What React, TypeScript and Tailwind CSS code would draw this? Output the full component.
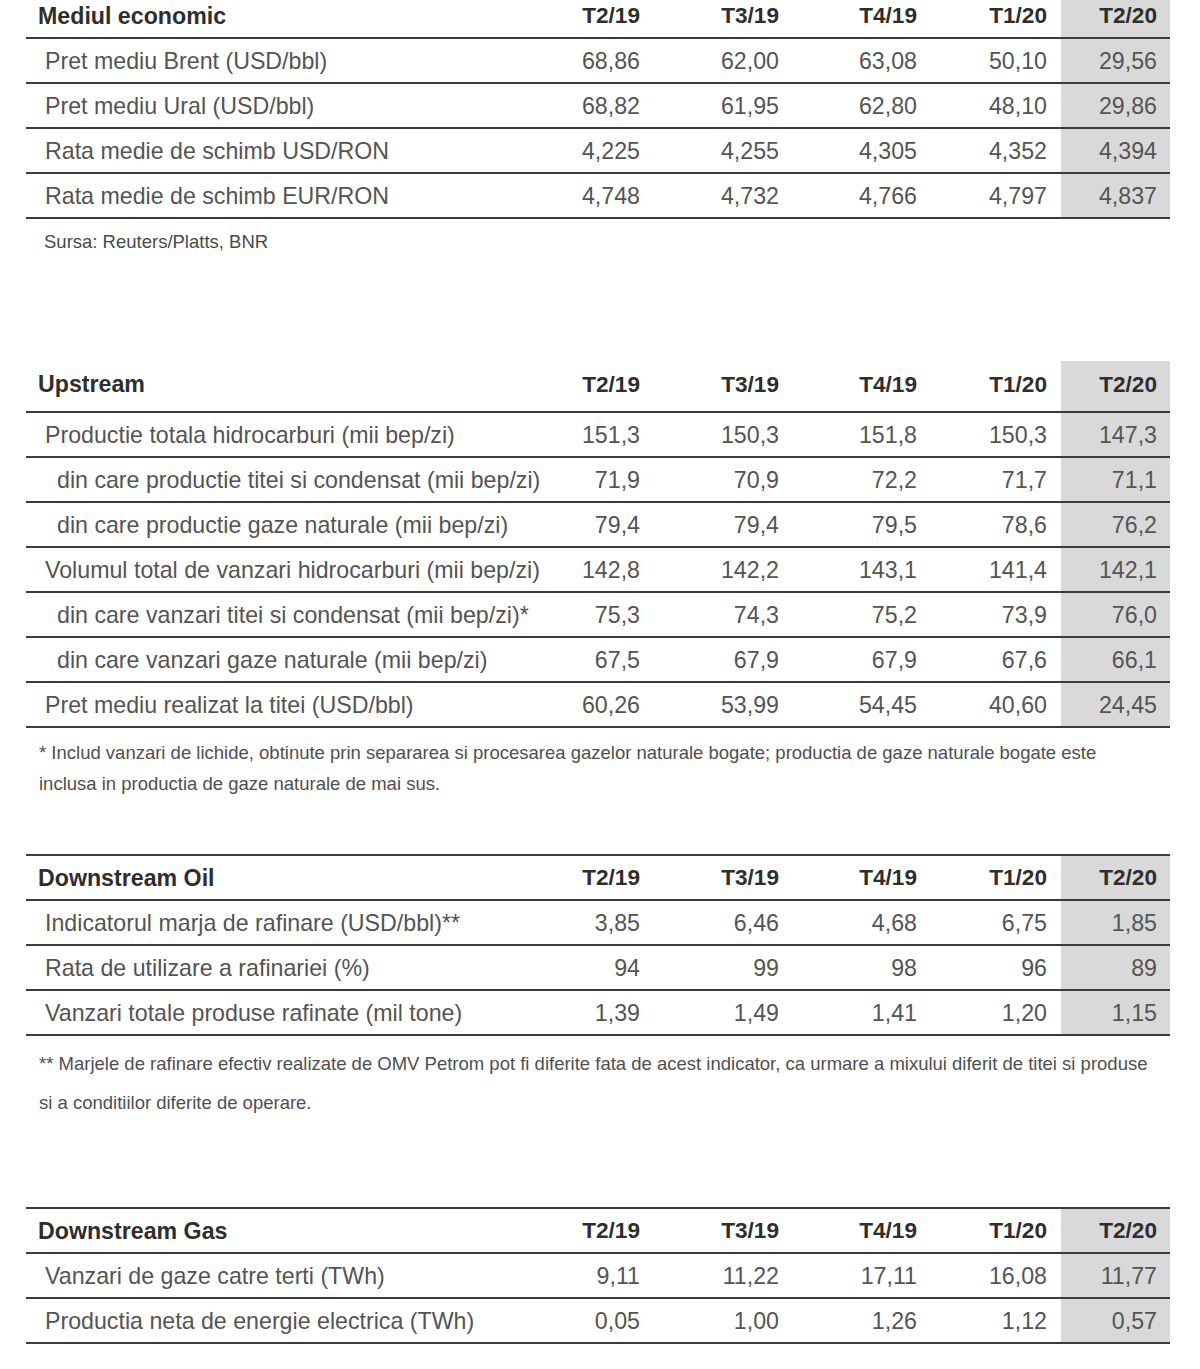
import React from 'react';

type Row = { label: string; values: string[]; indent?: boolean };

interface TableProps {
  title: string;
  rows: Row[];
  variant: 'top' | 'plain' | 'bordered';
}

const QUARTERS = ['T2/19', 'T3/19', 'T4/19', 'T1/20', 'T2/20'];
// widths of the numeric columns, left to right (first one is loose)
const COL_W = ['w-[110px]', 'w-[139px]', 'w-[138px]', 'w-[130px]', 'w-[109px]'];

function Cells({ values, bold, pad }: { values: string[]; bold?: boolean; pad: string }) {
  return (
    <>
      {values.map((v, i) => (
        <div
          key={i}
          className={`${COL_W[i]} ${pad} shrink-0 h-full flex items-center justify-end ${
            i === 4 ? 'pr-[13px] bg-[#d9d9d9]' : 'pr-[14px]'
          } ${bold ? 'font-bold text-[#2e2e2e] text-[22.6px]' : ''}`}
        >
          {v}
        </div>
      ))}
    </>
  );
}

function DataTable({ title, rows, variant }: TableProps) {
  const headerCls = variant === 'plain' ? 'h-[52px] border-b-2' : 'h-[47px] border-y-2';
  const headerPad = variant === 'plain' ? 'pb-[2px]' : 'pt-[2px]';

  return (
    <div className="text-[23.2px] leading-none text-[#545454]">
      {/* Header */}
      <div className={`flex items-stretch border-[#3b3b3b] ${headerCls}`}>
        <div className={`flex-1 flex items-center pl-[12px] font-bold text-[#2e2e2e] ${headerPad}`}>{title}</div>
        <Cells values={QUARTERS} bold pad={headerPad} />
      </div>

      {/* Rows */}
      {rows.map((r) => (
        <div key={r.label} className="flex items-stretch h-[45px] border-b-2 border-[#3b3b3b]">
          <div className={`flex-1 flex items-center pt-[3px] whitespace-nowrap ${r.indent ? 'pl-[31px]' : 'pl-[19px]'}`}>
            {r.label}
          </div>
          <Cells values={r.values} pad="pt-[3px]" />
        </div>
      ))}
    </div>
  );
}

const ECONOMIC: Row[] = [
  { label: 'Pret mediu Brent (USD/bbl)', values: ['68,86', '62,00', '63,08', '50,10', '29,56'] },
  { label: 'Pret mediu Ural (USD/bbl)', values: ['68,82', '61,95', '62,80', '48,10', '29,86'] },
  { label: 'Rata medie de schimb USD/RON', values: ['4,225', '4,255', '4,305', '4,352', '4,394'] },
  { label: 'Rata medie de schimb EUR/RON', values: ['4,748', '4,732', '4,766', '4,797', '4,837'] },
];

const UPSTREAM: Row[] = [
  { label: 'Productie totala hidrocarburi (mii bep/zi)', values: ['151,3', '150,3', '151,8', '150,3', '147,3'] },
  { label: 'din care productie titei si condensat (mii bep/zi)', values: ['71,9', '70,9', '72,2', '71,7', '71,1'], indent: true },
  { label: 'din care productie gaze naturale (mii bep/zi)', values: ['79,4', '79,4', '79,5', '78,6', '76,2'], indent: true },
  { label: 'Volumul total de vanzari hidrocarburi (mii bep/zi)', values: ['142,8', '142,2', '143,1', '141,4', '142,1'] },
  { label: 'din care vanzari titei si condensat (mii bep/zi)*', values: ['75,3', '74,3', '75,2', '73,9', '76,0'], indent: true },
  { label: 'din care vanzari gaze naturale (mii bep/zi)', values: ['67,5', '67,9', '67,9', '67,6', '66,1'], indent: true },
  { label: 'Pret mediu realizat la titei (USD/bbl)', values: ['60,26', '53,99', '54,45', '40,60', '24,45'] },
];

const DOWNSTREAM_OIL: Row[] = [
  { label: 'Indicatorul marja de rafinare (USD/bbl)**', values: ['3,85', '6,46', '4,68', '6,75', '1,85'] },
  { label: 'Rata de utilizare a rafinariei (%)', values: ['94', '99', '98', '96', '89'] },
  { label: 'Vanzari totale produse rafinate (mil tone)', values: ['1,39', '1,49', '1,41', '1,20', '1,15'] },
];

const DOWNSTREAM_GAS: Row[] = [
  { label: 'Vanzari de gaze catre terti (TWh)', values: ['9,11', '11,22', '17,11', '16,08', '11,77'] },
  { label: 'Productia neta de energie electrica (TWh)', values: ['0,05', '1,00', '1,26', '1,12', '0,57'] },
];

export default function App() {
  return (
    <div
      className="bg-white w-[1200px] h-[1369px] overflow-hidden"
      style={{ fontFamily: '"Liberation Sans", Arial, sans-serif' }}
    >
      <div className="ml-[26px] w-[1144px] pb-[25px]">
        <div className="-mt-[8px]">
          <DataTable title="Mediul economic" rows={ECONOMIC} variant="top" />
        </div>
        <p className="mt-[11px] pl-[18px] text-[18.5px] leading-[24px] text-[#4a4a4a]">
          Sursa: Reuters/Platts, BNR
        </p>

        <div className="mt-[107px]">
          <DataTable title="Upstream" rows={UPSTREAM} variant="plain" />
        </div>
        <p className="mt-[9px] pl-[13px] text-[18.5px] leading-[31px] text-[#4f4f4f]">
          * Includ vanzari de lichide, obtinute prin separarea si procesarea gazelor naturale bogate; productia de gaze naturale bogate este
          <br />
          inclusa in productia de gaze naturale de mai sus.
        </p>

        <div className="mt-[55px]">
          <DataTable title="Downstream Oil" rows={DOWNSTREAM_OIL} variant="bordered" />
        </div>
        <p className="mt-[8px] pl-[13px] text-[18.5px] leading-[39px] text-[#4f4f4f]">
          ** Marjele de rafinare efectiv realizate de OMV Petrom pot fi diferite fata de acest indicator, ca urmare a mixului diferit de titei si produse
          <br />
          si a conditiilor diferite de operare.
        </p>

        <div className="mt-[85px]">
          <DataTable title="Downstream Gas" rows={DOWNSTREAM_GAS} variant="bordered" />
        </div>
      </div>
    </div>
  );
}
